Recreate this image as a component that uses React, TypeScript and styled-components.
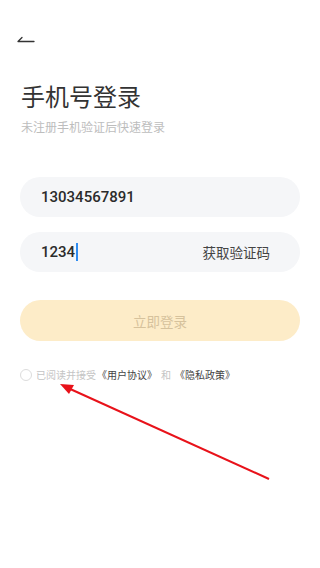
import React, { useState } from "react";
import styled, { createGlobalStyle } from "styled-components";

const GlobalStyle = createGlobalStyle`
  html, body {
    margin: 0;
    padding: 0;
    background: #ffffff;
  }
  body {
    font-family: Roboto, "Noto Sans CJK SC", sans-serif;
  }
`;

const Page = styled.div`
  position: relative;
  width: 320px;
  height: 568px;
  overflow: hidden;
  background: #fff;
  display: flex;
  flex-direction: column;
`;

const TopBar = styled.div`
  height: 44px;
  padding: 30px 0 0 14px;
  box-sizing: border-box;
  display: flex;
  align-items: flex-start;
`;

const BackButton = styled.button`
  width: 22px;
  height: 16px;
  padding: 0;
  border: none;
  background: transparent;
  display: flex;
  align-items: center;
  justify-content: center;
`;

const Header = styled.div`
  padding: 36px 21px 0;
  display: flex;
  flex-direction: column;
  gap: 6px;
`;

const Title = styled.h1`
  margin: 0;
  font-family: "Noto Sans CJK SC", sans-serif;
  font-weight: 400;
  font-size: 24px;
  line-height: 32px;
  color: #333;
`;

const Subtitle = styled.p`
  margin: 0;
  font-family: "Noto Sans CJK SC", sans-serif;
  font-size: 12px;
  line-height: 18px;
  color: #bdbdbd;
`;

const Form = styled.div`
  padding: 41px 20px 0;
  display: flex;
  flex-direction: column;
  gap: 15px;
`;

const Field = styled.div`
  height: 40px;
  border-radius: 20px;
  background: #f5f6f8;
  display: flex;
  align-items: center;
  padding: 0 30px 0 21px;
`;

const FieldValue = styled.span`
  flex: 1;
  font-family: Roboto, sans-serif;
  font-weight: 500;
  font-size: 15px;
  color: #2b2b2b;
  display: flex;
  align-items: center;
`;

const Caret = styled.span`
  display: inline-block;
  width: 1.5px;
  height: 18px;
  margin-left: 1px;
  background: #2f8cf0;
`;

const CodeButton = styled.button`
  border: none;
  background: transparent;
  padding: 0;
  font-family: "Noto Sans CJK SC", sans-serif;
  font-size: 13.5px;
  color: #444;
`;

const SubmitButton = styled.button<{ $enabled: boolean }>`
  margin-top: 13px;
  height: 41px;
  border: none;
  border-radius: 21px;
  background: ${(p) => (p.$enabled ? "#f9c05a" : "#fdecc8")};
  color: ${(p) => (p.$enabled ? "#fff" : "#d6c29c")};
  font-family: "Noto Sans CJK SC", sans-serif;
  font-size: 13.5px;
`;

const Agreement = styled.label`
  margin-top: 12px;
  display: flex;
  align-items: center;
  gap: 1px;
  font-family: "Noto Sans CJK SC", sans-serif;
  font-size: 10px;
  line-height: 14px;
  color: #c4c4c4;
  white-space: nowrap;
`;

const Radio = styled.span<{ $checked: boolean }>`
  width: 10px;
  height: 10px;
  border-radius: 50%;
  border: 1px solid #dcdcdc;
  background: ${(p) => (p.$checked ? "#f9c05a" : "#fff")};
  margin-right: 3px;
`;

const Link = styled.span`
  color: #444;
`;

const Joiner = styled.span`
  padding: 0 3px;
`;

const Annotation = styled.svg`
  position: absolute;
  left: 0;
  top: 0;
  pointer-events: none;
`;

const App: React.FC = () => {
  const [agreed, setAgreed] = useState(false);

  return (
    <>
      <GlobalStyle />
      <Page>
        <TopBar>
          <BackButton aria-label="back">
            <svg width="20" height="12" viewBox="0 0 20 12">
              <path
                d="M3 9.5 H19 M3 9.5 L7 5.5"
                stroke="#333"
                strokeWidth="1.3"
                fill="none"
                strokeLinecap="round"
              />
            </svg>
          </BackButton>
        </TopBar>
        <Header>
          <Title>手机号登录</Title>
          <Subtitle>未注册手机验证后快速登录</Subtitle>
        </Header>
        <Form>
          <Field>
            <FieldValue>13034567891</FieldValue>
          </Field>
          <Field>
            <FieldValue>
              1234
              <Caret />
            </FieldValue>
            <CodeButton>获取验证码</CodeButton>
          </Field>
          <SubmitButton $enabled={false}>立即登录</SubmitButton>
          <Agreement onClick={() => setAgreed(!agreed)}>
            <Radio $checked={agreed} />
            <span>已阅读并接受</span>
            <Link>《用户协议》</Link>
            <Joiner>和</Joiner>
            <Link>《隐私政策》</Link>
          </Agreement>
        </Form>
        <Annotation width="320" height="568" viewBox="0 0 320 568">
          <line x1="269" y1="479" x2="68" y2="388" stroke="#e8121a" strokeWidth="2" />
          <polygon points="60,384 74,385 69,394" fill="#e8121a" />
        </Annotation>
      </Page>
    </>
  );
};

export default App;
